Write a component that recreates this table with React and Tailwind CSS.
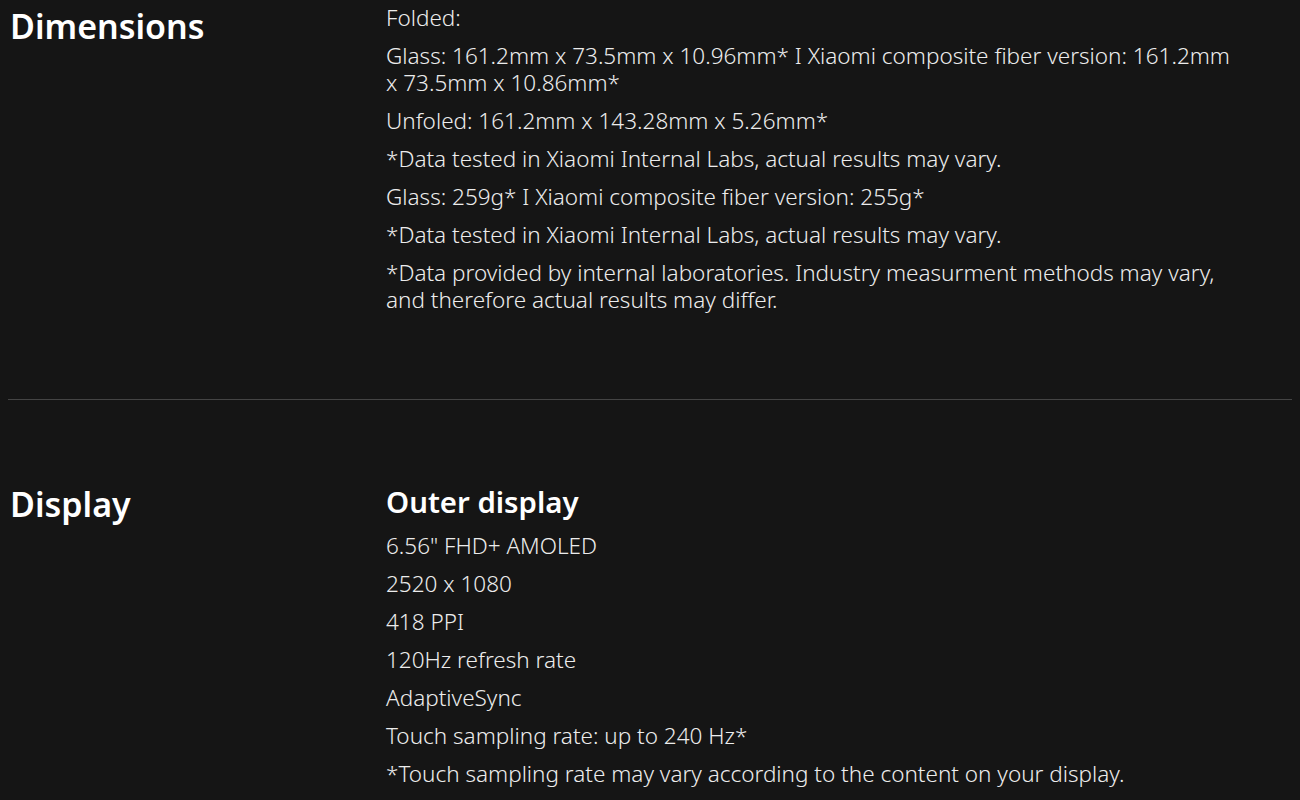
export default function App() {
  const dims = [
    "Folded:",
    "Glass: 161.2mm x 73.5mm x 10.96mm* I Xiaomi composite fiber version: 161.2mm x 73.5mm x 10.86mm*",
    "Unfoled: 161.2mm x 143.28mm x 5.26mm*",
    "*Data tested in Xiaomi Internal Labs, actual results may vary.",
    "Glass: 259g* I Xiaomi composite fiber version: 255g*",
    "*Data tested in Xiaomi Internal Labs, actual results may vary.",
    "*Data provided by internal laboratories. Industry measurment methods may vary, and therefore actual results may differ.",
  ];
  const disp = [
    '6.56" FHD+ AMOLED',
    "2520 x 1080",
    "418 PPI",
    "120Hz refresh rate",
    "AdaptiveSync",
    "Touch sampling rate: up to 240 Hz*",
    "*Touch sampling rate may vary according to the content on your display.",
  ];
  return (
    <div className="min-h-[800px] bg-[#151515] text-[#ececec] px-2 overflow-hidden" style={{ fontFamily: '"Noto Sans", sans-serif' }}>
      <div className="flex pt-[4px] pb-[75px]">
        <div className="w-[378px] pl-[2px] text-[34px] font-semibold leading-[44px] text-white">Dimensions</div>
        <div className="w-[845px] text-[22.5px] font-light leading-[27px]">
          {dims.map((d, i) => (
            <p key={i} className="mb-[11px]">{d}</p>
          ))}
        </div>
      </div>
      <div className="h-px bg-[#444444]" />
      <div className="flex pt-[82px]">
        <div className="w-[378px] pl-[2px] text-[34px] font-semibold leading-[44px] text-white">Display</div>
        <div className="w-[845px] text-[22.5px] font-light leading-[27px]">
          <h3 className="text-[29.4px] font-semibold leading-[40px] mb-[10px] text-white">Outer display</h3>
          {disp.map((d, i) => (
            <p key={i} className="mb-[11px]">{d}</p>
          ))}
        </div>
      </div>
    </div>
  );
}
